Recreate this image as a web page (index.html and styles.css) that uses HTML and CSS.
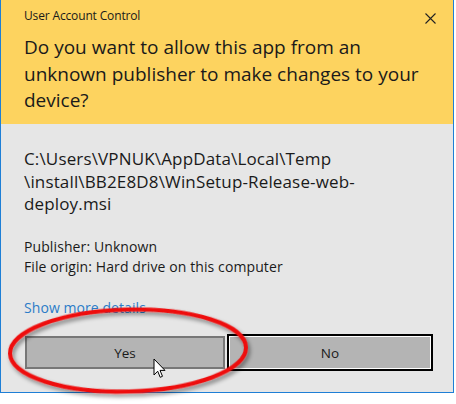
FILE: index.html
```html
<!DOCTYPE html>
<html>
<head>
<meta charset="utf-8">
<link rel="stylesheet" href="styles.css">
</head>
<body>
<div class="dialog">
  <div class="header">
    <div class="titlebar">
      <span class="title">User Account Control</span>
      <svg class="close" width="11" height="11" viewBox="0 0 11 11"><path d="M0.5 0.5 L10.5 10.5 M10.5 0.5 L0.5 10.5" stroke="#222" stroke-width="1.1" fill="none"/></svg>
    </div>
    <div class="question">Do you want to allow this app from an unknown publisher to make changes to your device?</div>
  </div>
  <div class="body">
    <div class="path">C:\Users\VPNUK\AppData\Local\Temp<br>\install\BB2E8D8\WinSetup-Release-web-<br>deploy.msi</div>
    <div class="info">Publisher: Unknown<br>File origin: Hard drive on this computer</div>
    <div class="link">Show more details</div>
    <div class="buttons">
      <div class="btn yes">Yes</div>
      <div class="btn no"><span class="inner">No</span></div>
    </div>
  </div>
</div>
<svg class="annot" width="456" height="404" viewBox="0 0 456 404">
  <defs>
    <filter id="sh" x="-20%" y="-20%" width="140%" height="140%">
      <feDropShadow dx="2" dy="3" stdDeviation="2" flood-color="#000" flood-opacity="0.45"/>
    </filter>
  </defs>
  <ellipse cx="128" cy="350.5" rx="118" ry="41" fill="none" stroke="#ee0f0f" stroke-width="4" filter="url(#sh)" transform="rotate(-1.5 128 350.5)"/>
</svg>
<svg class="cursor" width="14" height="21" viewBox="0 0 14 21">
  <path d="M1 1 L1 17 L4.7 13.2 L7.2 19.3 L9.5 18.3 L7 12.4 L12 12.4 Z" fill="#fff" stroke="#000" stroke-width="1" stroke-linejoin="miter"/>
</svg>
</body>
</html>
```
FILE: styles.css
```css
html, body {
  margin: 0;
  padding: 0;
  background: #ffffff;
}
body {
  width: 456px;
  height: 404px;
  position: relative;
  overflow: hidden;
  font-family: "Open Sans", "Noto Sans", sans-serif;
  color: #1a1a1a;
}
.dialog {
  width: 452px;
  height: 392px;
  border: 1px solid #1e7fd6;
  border-top: none;
  display: flex;
  flex-direction: column;
}
.header {
  background: #fdd35f;
  height: 124px;
  padding: 8px 0 0 23px;
  box-sizing: border-box;
}
.titlebar {
  display: flex;
  align-items: flex-start;
  height: 16px;
}
.title {
  font-size: 12px;
  line-height: 16px;
  letter-spacing: -0.15px;
  flex: 1;
}
.close {
  margin-right: 17px;
  margin-top: 5px;
}
.question {
  font-size: 19px;
  line-height: 26.5px;
  letter-spacing: 0;
  width: 410px;
  margin-top: 10px;
}
.body {
  flex: 1;
  background: #e6e6e6;
  padding: 0 0 0 23px;
  display: flex;
  flex-direction: column;
}
.path {
  font-size: 17px;
  line-height: 22.5px;
  letter-spacing: 0.15px;
  margin-top: 24px;
}
.info {
  font-size: 14px;
  line-height: 20px;
  letter-spacing: 0.1px;
  margin-top: 21.5px;
}
.link {
  font-size: 14px;
  line-height: 20px;
  letter-spacing: 0.07px;
  color: #2b7cc8;
  margin-top: 21px;
}
.buttons {
  display: flex;
  margin-top: 16px;
  margin-left: 1px;
  gap: 2px;
}
.btn {
  box-sizing: border-box;
  background: #b4b4b4;
  font-size: 13.5px;
  display: flex;
  align-items: center;
  justify-content: center;
}
.yes {
  width: 200px;
  height: 33px;
  margin-top: 2px;
  border: 2px solid #777777;
}
.no {
  width: 206px;
  height: 37px;
  border: 2px solid #000000;
}
.no .inner {
  flex: 1;
  align-self: stretch;
  display: flex;
  align-items: center;
  justify-content: center;
  border: 1px solid #ffffff;
}
.annot {
  position: absolute;
  left: 0;
  top: 0;
  pointer-events: none;
}
.cursor {
  position: absolute;
  left: 153px;
  top: 358px;
}
```
